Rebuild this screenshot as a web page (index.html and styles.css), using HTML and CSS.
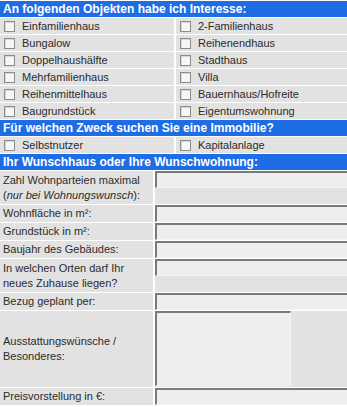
FILE: index.html
```html
<!DOCTYPE html>
<html lang="de">
<head>
  <meta charset="UTF-8" />
  <title>Suchauftrag</title>
  <link rel="stylesheet" href="styles.css">
</head>
<body>
  <div class="page">
    <table class="objekte">
      <tr><th colspan="2">An folgenden Objekten habe ich Interesse:</th></tr>
      <tr>
        <td class="left"><label><span class="box"></span>Einfamilienhaus</label></td>
        <td><label><span class="box"></span>2-Familienhaus</label></td>
      </tr>
      <tr>
        <td class="left"><label><span class="box"></span>Bungalow</label></td>
        <td><label><span class="box"></span>Reihenendhaus</label></td>
      </tr>
      <tr>
        <td class="left"><label><span class="box"></span>Doppelhaushälfte</label></td>
        <td><label><span class="box"></span>Stadthaus</label></td>
      </tr>
      <tr>
        <td class="left"><label><span class="box"></span>Mehrfamilienhaus</label></td>
        <td><label><span class="box"></span>Villa</label></td>
      </tr>
      <tr>
        <td class="left"><label><span class="box"></span>Reihenmittelhaus</label></td>
        <td><label><span class="box"></span>Bauernhaus/Hofreite</label></td>
      </tr>
      <tr>
        <td class="left"><label><span class="box"></span>Baugrundstück</label></td>
        <td><label><span class="box"></span>Eigentumswohnung</label></td>
      </tr>
      <tr><th colspan="2">Für welchen Zweck suchen Sie eine Immobilie?</th></tr>
      <tr>
        <td class="left"><label><span class="box"></span>Selbstnutzer</label></td>
        <td><label><span class="box"></span>Kapitalanlage</label></td>
      </tr>
      <tr><th colspan="2">Ihr Wunschhaus oder Ihre Wunschwohnung:</th></tr>
    </table>

    <table class="wunsch">
      <tr class="two">
        <td class="label">Zahl Wohnparteien maximal<br>(<em>nur bei Wohnungswunsch</em>):</td>
        <td class="field"><input type="text" class="text"></td>
      </tr>
      <tr>
        <td class="label">Wohnfläche in m²:</td>
        <td class="field"><input type="text" class="text"></td>
      </tr>
      <tr>
        <td class="label">Grundstück in m²:</td>
        <td class="field"><input type="text" class="text"></td>
      </tr>
      <tr>
        <td class="label">Baujahr des Gebäudes:</td>
        <td class="field"><input type="text" class="text"></td>
      </tr>
      <tr class="two">
        <td class="label">In welchen Orten darf Ihr<br>neues Zuhause liegen?</td>
        <td class="field"><input type="text" class="text"></td>
      </tr>
      <tr>
        <td class="label">Bezug geplant per:</td>
        <td class="field"><input type="text" class="text"></td>
      </tr>
      <tr class="big">
        <td class="label">Ausstattungswünsche /<br>Besonderes:</td>
        <td class="field"><textarea class="area"></textarea></td>
      </tr>
      <tr>
        <td class="label">Preisvorstellung in €:</td>
        <td class="field"><input type="text" class="text"></td>
      </tr>
    </table>
  </div>
</body>
</html>
```

FILE: styles.css
```css
body {
  margin: 0;
  background: #fff;
  font-family: "Liberation Sans", Arial, sans-serif;
  font-size: 11px;
  color: #2b2b2b;
}
.page {
  width: 347px;
  height: 407px;
  overflow: hidden;
}
table {
  border-collapse: separate;
  border-spacing: 2px 1px;
  margin: 0 0 0 -2px;
  width: 380px;
}
th {
  background: #1e6de4;
  color: #fff;
  font-size: 12px;
  font-weight: bold;
  text-align: left;
  height: 16px;
  line-height: 16px;
  padding: 0 3px;
}
.objekte td {
  background: #e2e2e2;
  height: 16px;
  padding: 0 0 0 4px;
  white-space: nowrap;
}
.objekte td.left {
  width: 170px;
}
.objekte label {
  display: flex;
  align-items: center;
  gap: 7px;
  height: 16px;
}
.box {
  width: 9px;
  height: 9px;
  border: 1px solid #8c8c8c;
  background: #f6f6f6;
  box-shadow: inset 1px 1px 0 #d8d8d8;
}
.wunsch {
  margin-top: -1px;
}
.wunsch td {
  background: #e2e2e2;
  padding: 0;
}
.wunsch td.label {
  width: 150px;
  padding: 0 0 0 3px;
  line-height: 15px;
  height: 17px;
  white-space: nowrap;
}
.wunsch tr.two td.label {
  height: 33px;
}
.wunsch tr.big td.label {
  height: 76px;
}
.wunsch td.field {
  vertical-align: top;
}
.text, .area {
  display: block;
  box-sizing: border-box;
  margin: 0;
  border: 1px solid #f4f4f4;
  border-top: 2px solid #7a7a7a;
  border-left: 2px solid #7a7a7a;
  background: #eeeeee;
  font: inherit;
  outline: none;
}
.text {
  width: 100%;
  height: 17px;
}
.area {
  width: 136px;
  height: 75px;
  resize: none;
}
```
